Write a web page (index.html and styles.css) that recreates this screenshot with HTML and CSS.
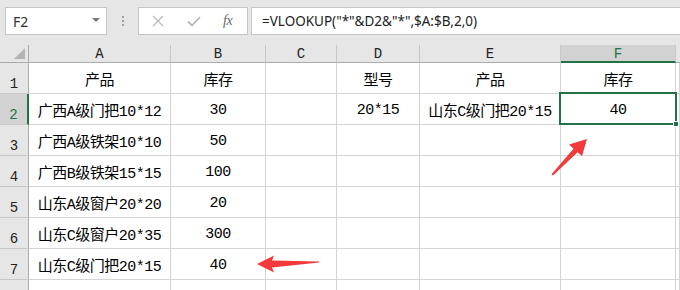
FILE: index.html
```html
<!DOCTYPE html>
<html>
<head>
<meta charset="utf-8">
<link rel="stylesheet" href="styles.css">
</head>
<body>
<div class="app">
  <div class="fbar">
    <div class="namebox"><span class="nb-text">F2</span><span class="nb-caret"></span></div>
    <div class="grip"><i></i><i></i><i></i></div>
    <div class="fbtns">
      <svg class="btn-x" width="12" height="12" viewBox="0 0 12 12"><path d="M1 1L11 11M11 1L1 11" stroke="#b9b9b9" stroke-width="1.3" fill="none"/></svg>
      <svg class="btn-ok" width="14" height="11" viewBox="0 0 14 11"><path d="M1 5.5L5 9.5L13 1" stroke="#b9b9b9" stroke-width="1.8" fill="none"/></svg>
      <span class="btn-fx">fx</span>
    </div>
    <div class="finput">=VLOOKUP("*"&amp;D2&amp;"*",$A:$B,2,0)</div>
  </div>
  <div class="sheet">
    <div class="ch corner"><span class="tri"></span></div>
    <div class="ch">A</div>
    <div class="ch">B</div>
    <div class="ch">C</div>
    <div class="ch">D</div>
    <div class="ch">E</div>
    <div class="ch sel">F</div>
    <div class="ch last"></div>

    <div class="rh">1</div>
    <div class="c">产品</div><div class="c">库存</div><div class="c"></div><div class="c">型号</div><div class="c">产品</div><div class="c">库存</div><div class="c"></div>

    <div class="rh sel">2</div>
    <div class="c">广西A级门把10*12</div><div class="c">30</div><div class="c"></div><div class="c">20*15</div><div class="c">山东C级门把20*15</div><div class="c active">40<span class="handle"></span></div><div class="c"></div>

    <div class="rh">3</div>
    <div class="c">广西A级铁架10*10</div><div class="c">50</div><div class="c"></div><div class="c"></div><div class="c"></div><div class="c"></div><div class="c"></div>

    <div class="rh">4</div>
    <div class="c">广西B级铁架15*15</div><div class="c">100</div><div class="c"></div><div class="c"></div><div class="c"></div><div class="c"></div><div class="c"></div>

    <div class="rh">5</div>
    <div class="c">山东A级窗户20*20</div><div class="c">20</div><div class="c"></div><div class="c"></div><div class="c"></div><div class="c"></div><div class="c"></div>

    <div class="rh">6</div>
    <div class="c">山东C级窗户20*35</div><div class="c">300</div><div class="c"></div><div class="c"></div><div class="c"></div><div class="c"></div><div class="c"></div>

    <div class="rh">7</div>
    <div class="c">山东C级门把20*15</div><div class="c">40</div><div class="c"></div><div class="c"></div><div class="c"></div><div class="c"></div><div class="c"></div>

    <div class="rh"></div>
    <div class="c"></div><div class="c"></div><div class="c"></div><div class="c"></div><div class="c"></div><div class="c"></div><div class="c"></div>
  </div>
  <svg class="arrows" width="680" height="290" viewBox="0 0 680 290">
    <polygon points="257,264 274,255.5 272,260.5 319,261.6 319,262.6 272,267.5 274,272.5" fill="#f23a3a"/>
    <polygon points="587,139 569,144.5 573.5,148.7 551.5,174.2 553,175.5 577.6,152.3 582,156" fill="#f23a3a"/>
  </svg>
</div>
</body>
</html>
```

FILE: styles.css
```css
* { box-sizing: border-box; }
html, body { margin: 0; padding: 0; }
body { width: 680px; height: 290px; overflow: hidden; background: #e6e6e6; }
.app { position: relative; width: 680px; height: 290px; overflow: hidden; }

.fbar {
  height: 45px;
  display: flex;
  align-items: flex-start;
  padding: 7px 0 0 5px;
  font-family: "Noto Sans", "Open Sans", sans-serif;
}
.namebox {
  width: 102px; height: 28px;
  background: #fff;
  border: 1px solid #c6c6c6;
  display: flex; align-items: center; justify-content: space-between;
  padding: 0 6px 0 7px;
}
.nb-text { font-size: 14px; color: #333; }
.nb-caret {
  width: 0; height: 0;
  border-left: 4px solid transparent;
  border-right: 4px solid transparent;
  border-top: 4px solid #777;
  margin-top: -2px;
}
.grip {
  width: 31px; height: 28px;
  display: flex; flex-direction: column; align-items: center; justify-content: center; gap: 2px;
}
.grip i { display: block; width: 2px; height: 2px; background: #a0a0a0; }
.fbtns {
  width: 110px; height: 28px;
  background: #fff;
  border: 1px solid #c6c6c6;
  display: flex; align-items: center;
  padding-left: 13px;
}
.btn-x { margin-right: 23px; }
.btn-ok { margin-right: 22px; }
.btn-fx {
  font-family: "Liberation Serif", serif;
  font-style: italic;
  font-size: 14px;
  color: #666;
  letter-spacing: -0.5px;
}
.finput {
  flex: 1;
  margin-left: 3px; margin-right: -5px;
  height: 28px;
  background: #fff;
  border: 1px solid #c6c6c6;
  padding-left: 10px;
  font-size: 13.5px;
  line-height: 26px;
  color: #222;
  white-space: nowrap;
}

.sheet {
  display: grid;
  grid-template-columns: 29px 142px 95px 71px 83px 141px 115px 1fr;
  grid-template-rows: 18px repeat(8, 31px);
  background: #fff;
  font-family: "Liberation Mono", "Noto Sans CJK SC", monospace;
  font-size: 15px;
  color: #000;
}
.ch {
  background: #e6e6e6;
  border-bottom: 1px solid #ababab;
  border-right: 1px solid #c8c8c8;
  display: flex; align-items: center; justify-content: center;
  font-size: 14px;
  padding-top: 1px;
  color: #222;
}
.ch.corner { border-right: 1px solid #ababab; position: relative; }
.ch.last { border-right: none; }
.ch.sel { background: #d2d2d2; color: #217346; border-bottom: 2px solid #217346; }
.tri {
  position: absolute; right: 3px; bottom: 3px;
  width: 0; height: 0;
  border-left: 11px solid transparent;
  border-bottom: 11px solid #b4b4b4;
}
.rh {
  background: #e6e6e6;
  border-right: 1px solid #ababab;
  border-bottom: 1px solid #c8c8c8;
  display: flex; align-items: flex-end; justify-content: center;
  padding-bottom: 1px;
  font-size: 14px;
  color: #222;
}
.rh.sel { background: #d2d2d2; color: #217346; border-right: 2px solid #217346; }
.c {
  border-right: 1px solid #d4d4d4;
  border-bottom: 1px solid #d4d4d4;
  display: flex; align-items: center; justify-content: center;
  padding-top: 2px;
  letter-spacing: -0.5px;
  white-space: nowrap;
}
.c.active { position: relative; }
.c.active::after {
  content: "";
  position: absolute;
  left: -2px; top: -2px; right: -2px; bottom: -1px;
  border: 2px solid #217346;
}
.handle {
  position: absolute; right: -4px; bottom: -3px;
  width: 6px; height: 6px;
  background: #217346;
  border: 1px solid #fff;
  z-index: 2;
}
.arrows { position: absolute; left: 0; top: 0; pointer-events: none; }
```
